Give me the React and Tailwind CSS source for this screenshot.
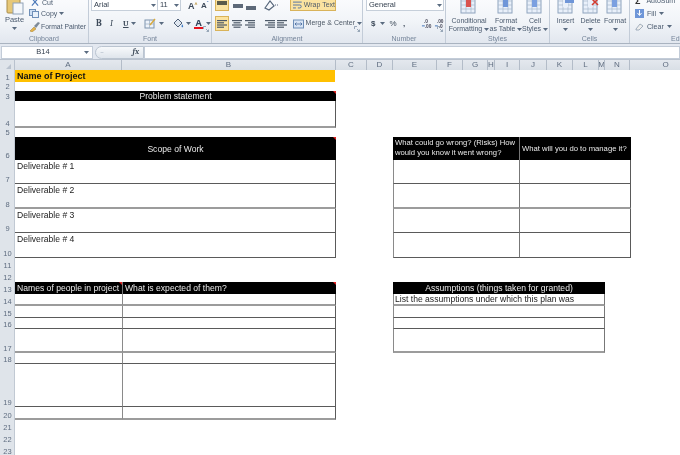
const colTracks = "grid-cols-[107px_214px_31px_26px_44px_26px_25px_7px_25px_27px_26px_26px_6px_25px_72px]";

const Arrow = ({ className = "" }) => (
  <svg width="5" height="3" viewBox="0 0 5 3" className={`shrink-0 ${className}`}>
    <path d="M0 0h5L2.5 3z" fill="#5a6b80" />
  </svg>
);

const Launcher = () => (
  <svg width="6" height="6" viewBox="0 0 6 6" className="absolute right-[2px] bottom-[1px]">
    <path d="M.5 3V.5H3M3 3l2.5 2.5M5.5 3.5v2h-2" fill="none" stroke="#8394a8" strokeWidth=".8" />
  </svg>
);

const Group = ({ w, label, children }) => (
  <div className={`relative flex flex-col shrink-0 border-r border-[#c3ccd8] ${w}`}>
    <div className="h-[33px] overflow-hidden relative">{children}</div>
    <div className="h-[10px] text-center text-[7px] leading-[11px] text-[#75859a]">{label}</div>
  </div>
);

const Lines = ({ kind }) => {
  const rows = {
    left: [[1, 10], [1, 7], [1, 10], [1, 7]],
    center: [[1, 10], [2.5, 7], [1, 10], [2.5, 7]],
    right: [[1, 10], [4, 7], [1, 10], [4, 7]],
  }[kind];
  return (
    <svg width="12" height="10" viewBox="0 0 12 10">
      {rows.map(([x, w], i) => (
        <rect key={i} x={x} y={1 + i * 2.2} width={w} height="1.2" fill="#4d5968" />
      ))}
    </svg>
  );
};

const Big = ({ label1, label2, arrow, w, icon }) => (
  <div className={`flex flex-col items-center shrink-0 ${w}`}>
    <div className="h-[17px] w-full flex justify-center items-start">{icon}</div>
    <div className="text-[7px] leading-[8px] text-[#4a5a6e] whitespace-nowrap">{label1}</div>
    <div className="text-[7px] leading-[8px] text-[#4a5a6e] whitespace-nowrap flex items-center justify-center gap-[2px] h-[8px]">
      {label2}
      {arrow && <Arrow />}
    </div>
  </div>
);

const TableIcon = ({ accent = "#6f96d8", extra }) => (
  <svg width="20" height="14" viewBox="0 0 20 14">
    <rect x="2" y="-4" width="14" height="17" fill="#e9f0fa" stroke="#8ea3bd" />
    <path d="M2 1h14M2 5h14M2 9h14M7 -4v17M12 -4v17" stroke="#a9b9cc" strokeWidth=".7" />
    <rect x="7" y="-4" width="5" height="11" fill={accent} />
    {extra}
  </svg>
);

const Ribbon = () => (
  <div className="flex h-[44px] bg-gradient-to-b from-[#fafbfd] via-[#f1f4f8] to-[#e2e7ef] border-b border-[#a9b3c0]">
    <Group w="w-[89px]" label="Clipboard">
      <div className="flex h-full">
        <div className="w-[29px] flex flex-col items-center shrink-0">
          <svg width="20" height="15" viewBox="0 0 20 15">
            <rect x="2" y="-4" width="13" height="17" rx="1" fill="#e7c878" stroke="#a98c4a" />
            <rect x="8" y="3" width="10" height="11" fill="#f4f7fb" stroke="#8fa2b8" />
          </svg>
          <div className="text-[7.5px] leading-[10px] text-[#4a5a6e]">Paste</div>
          <Arrow className="mt-[2px]" />
        </div>
        <div className="flex flex-col text-[7px] text-[#4a5a6e] leading-[9px] whitespace-nowrap">
          <div className="h-[7px] flex items-end gap-[3px] pl-[2px]">
            <svg width="8" height="9" viewBox="0 0 9 9"><path d="M1 8l6-7M8 8L2 1" stroke="#4b78b8" strokeWidth="1.3" /></svg>
            <span>Cut</span>
          </div>
          <div className="flex items-center gap-[2px] h-[13px]">
            <svg width="10" height="9" viewBox="0 0 10 9"><rect x=".5" y=".5" width="6" height="6" fill="#cfe0f5" stroke="#6f8fb8" /><rect x="3.5" y="2.5" width="6" height="6" fill="#e9f1fb" stroke="#6f8fb8" /></svg>
            <span>Copy</span>
            <Arrow />
          </div>
          <div className="flex items-center gap-[1px] h-[13px] text-[6.8px]">
            <svg width="11" height="10" viewBox="0 0 11 10"><path d="M1 9l4-4 2 2-4 3z" fill="#e3b34c" stroke="#a37c2a" strokeWidth=".5" /><path d="M5 4l4-4 2 1-4 5z" fill="#7d8a98" /></svg>
            <span>Format Painter</span>
          </div>
        </div>
      </div>
      <span />
    </Group>

    <Group w="w-[123px]" label="Font">
      <div className="flex flex-col pl-[2px]">
        <div className="flex h-[11px] items-center">
          <div className="w-[67px] h-[11px] bg-white border border-t-0 border-[#c6cfda] flex items-center justify-between px-[1px] text-[7.5px] text-[#333f4e]">
            <span className="pl-[1px]">Arial</span><Arrow />
          </div>
          <div className="w-[23px] h-[11px] bg-white border border-l-0 border-t-0 border-[#c6cfda] flex items-center justify-between pl-[2px] pr-[1px] text-[7.5px] text-[#333f4e]">
            <span>11</span><Arrow />
          </div>
          <span className="ml-[7px] w-[13px] text-[9px] font-bold text-[#3d4a5a] leading-[10px]">A<sup className="text-[5px] text-[#b58a2c]">^</sup></span>
          <span className="text-[8px] font-bold text-[#3d4a5a] leading-[10px]">A<sup className="text-[5px] text-[#4b78b8]">ˇ</sup></span>
        </div>
        <div className="flex items-center h-[15px] mt-[5px] text-[#3d4a5a] text-[9px] font-serif">
          <span className="ml-[5px] w-[14px] font-bold">B</span>
          <span className="w-[13px] italic">I</span>
          <span className="w-[8px] underline font-bold text-[8px]">U</span>
          <Arrow className="mr-[8px]" />
          <svg width="12" height="11" viewBox="0 0 12 11" className="mr-[3px]"><rect x="1" y="2" width="9" height="8" fill="#eef3fa" stroke="#7d93ad" /><path d="M1 6h9M5.5 2v8" stroke="#9aacc0" strokeWidth=".7" /><path d="M6 7l5-6" stroke="#d9a93a" strokeWidth="1.4" /></svg>
          <Arrow className="mr-[9px]" />
          <svg width="11" height="11" viewBox="0 0 11 11" className="mr-[2px]"><path d="M5 1l4 4-4 4-4-4z" fill="#dfe6ef" stroke="#4f6078" /><path d="M9 6c1 1.5 1.5 2 1 3-.8.6-1.6 0-1.4-1z" fill="#3a77c4" /></svg>
          <Arrow className="mr-[3px]" />
          <div className="flex flex-col items-center w-[9px] mr-[3px]">
            <span className="text-[9px] leading-[9px] font-bold text-[#34465c] font-sans">A</span>
            <span className="h-[2px] w-[9px] bg-[#e8121c]" />
          </div>
          <Arrow />
        </div>
      </div>
      <Launcher />
    </Group>

    <Group w="w-[151px]" label="Alignment">
      <div className="flex flex-col pl-[3px]">
        <div className="flex h-[11px] items-center">
          <div className="w-[14px] h-[11px] bg-[#fbe3a0] border border-t-0 border-[#d9b35a] flex items-center justify-center"><span className="w-[10px] h-[4px] bg-[#5b5b4a] -mt-[5px]" /></div>
          <div className="w-[13px] flex justify-center ml-[2px]"><span className="w-[10px] h-[4px] bg-[#5d6979]" /></div>
          <div className="w-[13px] flex justify-center"><span className="w-[10px] h-[4px] bg-[#5d6979] mt-[5px]" /></div>
          <svg width="16" height="11" viewBox="0 0 16 11" className="ml-[7px]"><path d="M1 8l5-7 4 5-5 4z" fill="none" stroke="#55657a" strokeWidth="1.2" /><path d="M11 5h4" stroke="#55657a" strokeDasharray="1 1" /></svg>
          <div className="ml-[10px] w-[46px] h-[11px] bg-[#fbe3a0] border border-t-0 border-[#d9b35a] flex items-center gap-[2px] pl-[2px] text-[7px] text-[#4f5a68] whitespace-nowrap">
            <svg width="9" height="9" viewBox="0 0 9 9"><path d="M0 1h9M0 4h7a1.5 1.5 0 010 3H5M0 7h3" fill="none" stroke="#5574a4" strokeWidth="1" /></svg>
            Wrap Text
          </div>
        </div>
        <div className="flex items-center h-[15px] mt-[5px]">
          <div className="w-[14px] h-[15px] bg-[#fbe3a0] border border-[#d9b35a] flex items-center justify-center"><Lines kind="left" /></div>
          <div className="w-[13px] flex justify-center ml-[2px]"><Lines kind="center" /></div>
          <div className="w-[13px] flex justify-center"><Lines kind="right" /></div>
          <div className="w-[13px] flex justify-center ml-[7px]"><Lines kind="right" /></div>
          <div className="w-[13px] flex justify-center"><Lines kind="left" /></div>
          <div className="flex items-center gap-[2px] ml-[4px] text-[7px] text-[#4f5a68] whitespace-nowrap">
            <svg width="11" height="10" viewBox="0 0 11 10"><rect x=".5" y="1" width="10" height="8" fill="#d8e4f4" stroke="#6f8fb8" /><path d="M2 5h7M2 5l1.5-1.5M2 5l1.5 1.5M9 5L7.5 3.5M9 5L7.5 6.5" stroke="#3a5f95" strokeWidth=".7" fill="none" /></svg>
            Merge &amp; Center
            <Arrow />
          </div>
        </div>
      </div>
      <Launcher />
    </Group>

    <Group w="w-[83px]" label="Number">
      <div className="flex flex-col pl-[3px]">
        <div className="w-[78px] h-[11px] bg-white border border-t-0 border-[#c6cfda] flex items-center justify-between px-[1px] text-[7.5px] text-[#333f4e]">
          <span className="pl-[1px]">General</span><Arrow />
        </div>
        <div className="flex items-center h-[15px] mt-[5px] text-[8px] text-[#3d4a5a] font-bold">
          <span className="ml-[5px] w-[9px]">$</span>
          <Arrow className="mr-[5px]" />
          <span className="w-[13px] font-normal">%</span>
          <span className="ml-[1px] w-[14px]">,</span>
          <svg width="12" height="11" viewBox="0 0 12 11" className="ml-[5px]"><path d="M1 8h3" stroke="#3a6fb5" /><text x="3" y="5" fontSize="5" fill="#445">.0</text><text x="4" y="10.5" fontSize="5" fill="#445">.00</text></svg>
          <svg width="12" height="11" viewBox="0 0 12 11" className="ml-[1px]"><path d="M1 8h3" stroke="#3a6fb5" /><text x="3" y="5" fontSize="5" fill="#445">.00</text><text x="5" y="10.5" fontSize="5" fill="#445">.0</text></svg>
        </div>
      </div>
      <Launcher />
    </Group>

    <Group w="w-[104px]" label="Styles">
      <div className="flex pl-[1px]">
        <Big w="w-[44px]" label1="Conditional" label2="Formatting" arrow icon={<TableIcon accent="#d9534f" />} />
        <Big w="w-[30px]" label1="Format" label2="as Table" arrow icon={<TableIcon />} />
        <Big w="w-[28px]" label1="Cell" label2="Styles" arrow icon={<TableIcon accent="#7a9fe0" />} />
      </div>
    </Group>

    <Group w="w-[80px]" label="Cells">
      <div className="flex pl-[3px]">
        <Big w="w-[25px]" label1="Insert" label2="" arrow icon={<TableIcon accent="#e9f0fa" extra={<rect x="9" y="-1" width="9" height="4" fill="#6f96d8" />} />} />
        <Big w="w-[25px]" label1="Delete" label2="" arrow icon={<TableIcon accent="#e9f0fa" extra={<path d="M11 -1l6 6M17 -1l-6 6" stroke="#d43c30" strokeWidth="1.5" />} />} />
        <Big w="w-[24px]" label1="Format" label2="" arrow icon={<TableIcon accent="#7a9fe0" />} />
      </div>
    </Group>

    <div className="relative flex flex-col flex-1 min-w-0 overflow-hidden">
      <div className="h-[33px] flex flex-col pl-[5px] text-[7px] text-[#4a5a6e] leading-[9px]">
        <div className="h-[5px] flex items-end gap-[6px] whitespace-nowrap"><span className="text-[9px] font-bold leading-[8px] text-[#333]">Σ</span><span>AutoSum</span><Arrow /></div>
        <div className="flex items-center gap-[3px] h-[13px] mt-[2px]">
          <svg width="9" height="9" viewBox="0 0 9 9"><rect width="9" height="9" fill="#6f96d8" /><path d="M4.5 1v5M2.5 4l2 2.5 2-2.5" stroke="#fff" fill="none" /></svg>
          <span>Fill</span><Arrow />
        </div>
        <div className="flex items-center gap-[3px] h-[13px] mt-[1px]">
          <svg width="9" height="8" viewBox="0 0 9 8"><path d="M1 6l4-5 3 2-4 4H1z" fill="#eee" stroke="#8393a6" strokeWidth=".7" /></svg>
          <span>Clear</span><Arrow />
        </div>
      </div>
      <div className="h-[10px] pl-[41px] text-[7px] leading-[11px] text-[#75859a] whitespace-nowrap">Editing</div>
    </div>
  </div>
);

const FormulaBar = () => (
  <div className="flex h-[16px] items-center bg-[#e3e8f0] border-b border-[#b9c2ce] pt-[1px]">
    <div className="w-[92px] h-[13px] ml-[1px] bg-white border border-[#c3ccd8] flex items-center text-[7.5px] text-[#333f4e]">
      <span className="w-[82px] text-center">B14</span><Arrow />
    </div>
    <div className="w-[49px] h-[13px] ml-[2px] rounded-l-full bg-gradient-to-b from-[#f7f9fb] to-[#dfe5ec] border border-[#bac4d0] flex items-center justify-between pl-[4px] pr-[4px]">
      <span className="text-[6px] text-[#a9b4c2]">⌢</span>
      <span className="text-[8px] italic font-bold font-serif text-[#44515f]">fx</span>
    </div>
    <div className="flex-1 h-[13px] bg-white border border-[#c3ccd8]" />
  </div>
);

const letters = ["A","B","C","D","E","F","G","H","I","J","K","L","M","N","O"];
const ColHeader = () => (
  <div className="flex h-[10px] shrink-0">
    <div className="w-[15px] shrink-0 bg-[#dfe4ea] border-r border-[#b9c2ce] flex justify-end items-end pr-[3px] pb-[1px]">
      <svg width="5" height="5" viewBox="0 0 5 5"><path d="M5 0v5H0z" fill="#b9c2ce" /></svg>
    </div>
    <div className={`grid ${colTracks} shrink-0`}>
      {letters.map((l) => (
        <div key={l} className="bg-gradient-to-b from-[#e4e8ee] to-[#d9dfe6] border-r border-[#b3bcc8] flex items-center justify-center text-[8px] leading-[10px] text-[#5f6d80] overflow-hidden">{l}</div>
      ))}
    </div>
  </div>
);

const rowNums = Array.from({ length: 23 }, (_, i) => i + 1);
const rowTracks = "grid-rows-[12px_9px_10px_27px_9px_23px_24px_25px_24px_25px_12px_12px_12px_12px_12px_11px_24px_11px_43px_13px_12px_12px_12px]";

const Comment = () => (
  <span className="absolute top-0 right-0 w-0 h-0 border-t-[3px] border-l-[3px] border-t-[#e02020] border-l-transparent" />
);

const dark = "border-b border-[#5a5a5a]";
const soft = "border-b-2 border-[#9c9c9c]";
const head = "bg-black text-[#e8e8e8] relative";

const Sheet = () => (
  <div className="flex flex-1 min-h-0 overflow-hidden">
    <div className={`grid ${rowTracks} w-[15px] shrink-0 bg-[#dfe4ea] border-r border-[#c1c9d3]`}>
      {rowNums.map((n) => (
        <div key={n} className="flex items-end justify-center text-[7.5px] leading-[9px] text-[#5f6d80] pl-[1px]">{n}</div>
      ))}
    </div>
    <div className={`grid ${colTracks} ${rowTracks} shrink-0 text-[8.6px] leading-[10px] text-[#222222]`}>
      <div className="col-[1/3] row-[1] bg-[#ffc000] font-bold text-[9px] leading-[12px] text-[#111] pl-[2px] mr-[1px]">Name of Project</div>

      <div className={`col-[1/3] row-[3] ${head} text-center leading-[11px] overflow-hidden`}>Problem statement<Comment /></div>
      <div className={`col-[1/3] row-[4] ${soft} border-r border-r-[#5a5a5a]`} />

      <div className={`col-[1/3] row-[6] ${head} flex items-center justify-center`}>Scope of Work<Comment /></div>
      <div className={`col-[1/3] row-[7] ${dark} border-r border-r-[#5a5a5a] pl-[2px] pt-[1px]`}>Deliverable # 1</div>
      <div className={`col-[1/3] row-[8] ${soft} border-r border-r-[#5a5a5a] pl-[2px] pt-[1px]`}>Deliverable # 2</div>
      <div className={`col-[1/3] row-[9] ${dark} border-r border-r-[#5a5a5a] pl-[2px] pt-[1px]`}>Deliverable # 3</div>
      <div className={`col-[1/3] row-[10] ${dark} border-r border-r-[#5a5a5a] pl-[2px] pt-[1px]`}>Deliverable # 4</div>

      <div className={`col-[5/10] row-[6] ${head} text-[7.7px] leading-[10px] pl-[2px] pt-[1px] border-r border-r-[#777] whitespace-nowrap overflow-hidden`}>What could go wrong? (Risks) How<br />would you know it went wrong?</div>
      <div className={`col-[10/15] row-[6] ${head} text-[7.7px] flex items-center pl-[2px] whitespace-nowrap -mr-[1px]`}>What will you do to manage it?</div>
      {[
        ["row-[7]", dark],
        ["row-[8]", soft],
        ["row-[9]", dark],
        ["row-[10]", dark],
      ].map(([r, b]) => (
        <div key={r} className="contents">
          <div className={`col-[5/10] ${r} ${b} border-l border-l-[#8a8a8a] border-r border-r-[#777]`} />
          <div className={`col-[10/15] ${r} ${b} border-r border-r-[#5a5a5a] -mr-[1px]`} />
        </div>
      ))}

      <div className={`col-[1] row-[13] ${head} pl-[2px] leading-[12px] whitespace-nowrap overflow-hidden`}>Names of people in project<Comment /></div>
      <div className={`col-[2] row-[13] ${head} pl-[2px] leading-[12px] border-l border-l-[#777]`}>What is expected of them?<Comment /></div>
      {[
        ["row-[14]", soft],
        ["row-[15]", dark],
        ["row-[16]", dark],
        ["row-[17]", soft],
        ["row-[18]", dark],
        ["row-[19]", dark],
        ["row-[20]", soft],
      ].map(([r, b]) => (
        <div key={r} className="contents">
          <div className={`col-[1] ${r} ${b}`} />
          <div className={`col-[2] ${r} ${b} border-l border-l-[#8a8a8a] border-r border-r-[#5a5a5a]`} />
        </div>
      ))}

      <div className={`col-[5/14] row-[13] ${head} text-center leading-[12px]`}>Assumptions (things taken for granted)</div>
      <div className={`col-[5/14] row-[14] ${soft} border-l border-l-[#8a8a8a] border-r border-r-[#777] pl-[1px] leading-[11px] whitespace-nowrap`}>List the assumptions under which this plan was</div>
      <div className={`col-[5/14] row-[15] ${dark} border-l border-l-[#8a8a8a] border-r border-r-[#777]`} />
      <div className={`col-[5/14] row-[16] ${dark} border-l border-l-[#8a8a8a] border-r border-r-[#777]`} />
      <div className={`col-[5/14] row-[17] ${soft} border-l border-l-[#8a8a8a] border-r border-r-[#777]`} />
    </div>
  </div>
);

export default function App() {
  return (
    <div className="w-[680px] h-[455px] overflow-hidden flex flex-col bg-white blur-[0.3px] font-['Liberation_Sans',Arial,sans-serif]">
      <Ribbon />
      <FormulaBar />
      <ColHeader />
      <Sheet />
    </div>
  );
}
